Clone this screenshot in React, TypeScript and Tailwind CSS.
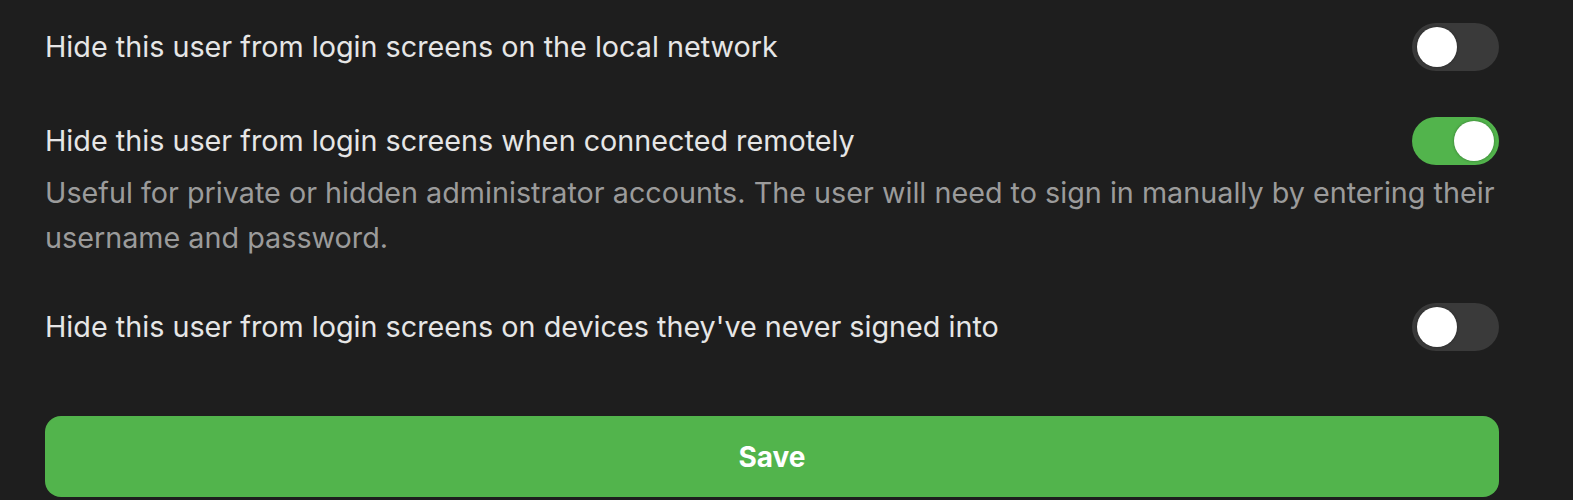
import { useState } from "react";

function Toggle({ on, onChange }: { on: boolean; onChange: () => void }) {
  return (
    <button
      type="button"
      onClick={onChange}
      className={`flex h-[48px] w-[87px] shrink-0 items-center rounded-full px-[5px] transition-colors ${
        on ? "justify-end bg-[#52b44c]" : "justify-start bg-[#3a3a3a]"
      }`}
    >
      <span className="h-[40px] w-[40px] rounded-full bg-white shadow-[0_0_3px_rgba(0,0,0,0.35)]" />
    </button>
  );
}

export default function App() {
  const [local, setLocal] = useState(false);
  const [remote, setRemote] = useState(true);
  const [devices, setDevices] = useState(false);

  return (
    <div className="min-h-[500px] w-full bg-[#1e1e1e] pl-[45px] pr-[74px] pt-[23px] font-['Inter',sans-serif] text-[28.75px]">
      <div className="flex h-[48px] items-center justify-between">
        <span className="text-[#e6e6e6]">Hide this user from login screens on the local network</span>
        <Toggle on={local} onChange={() => setLocal(!local)} />
      </div>

      <div className="mt-[46px]">
        <div className="flex h-[48px] items-center justify-between">
          <span className="text-[#e6e6e6]">Hide this user from login screens when connected remotely</span>
          <Toggle on={remote} onChange={() => setRemote(!remote)} />
        </div>
        <p className="mt-[5px] leading-[45px] text-[#9b9b9b]">
          Useful for private or hidden administrator accounts. The user will need to sign in manually by entering their
          username and password.
        </p>
      </div>

      <div className="mt-[43px] flex h-[48px] items-center justify-between">
        <span className="text-[#e6e6e6]">Hide this user from login screens on devices they've never signed into</span>
        <Toggle on={devices} onChange={() => setDevices(!devices)} />
      </div>

      <button
        type="button"
        className="mt-[65px] flex h-[81px] w-full items-center justify-center rounded-[16px] bg-[#52b44c] text-[28px] font-bold text-white"
      >
        Save
      </button>
    </div>
  );
}
